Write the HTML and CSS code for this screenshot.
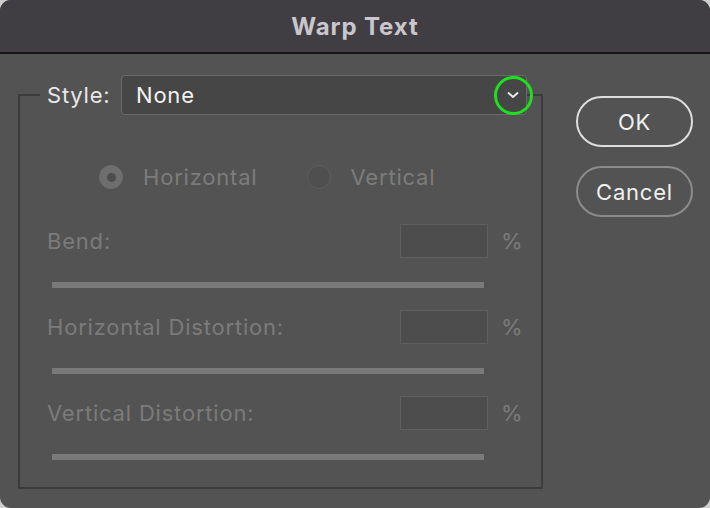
FILE: index.html
```html
<!DOCTYPE html>
<html>
<head>
<meta charset="utf-8">
<link rel="stylesheet" href="styles.css">
</head>
<body>
<div class="dialog">
  <div class="titlebar">Warp Text</div>
  <div class="content">
    <fieldset class="group">
      <legend class="style-row">
        <span class="style-label">Style:</span>
        <div class="select">
          <span class="select-value">None</span>
          <svg class="chevron" width="14" height="8" viewBox="0 0 14 8"><path d="M2.5 2 L7 6 L11.5 2" fill="none" stroke="#ececec" stroke-width="1.8" stroke-linecap="round" stroke-linejoin="round"/></svg>
          <span class="highlight"></span>
        </div>
      </legend>
      <div class="group-body">
        <div class="radios">
          <label class="radio"><span class="dot on"></span><span class="radio-text">Horizontal</span></label>
          <label class="radio"><span class="dot"></span><span class="radio-text">Vertical</span></label>
        </div>
        <div class="setting">
          <div class="setting-row">
            <span class="setting-label">Bend:</span>
            <span class="field"></span>
            <span class="pct">%</span>
          </div>
          <div class="track"></div>
        </div>
        <div class="setting">
          <div class="setting-row">
            <span class="setting-label">Horizontal Distortion:</span>
            <span class="field"></span>
            <span class="pct">%</span>
          </div>
          <div class="track"></div>
        </div>
        <div class="setting">
          <div class="setting-row">
            <span class="setting-label">Vertical Distortion:</span>
            <span class="field"></span>
            <span class="pct">%</span>
          </div>
          <div class="track"></div>
        </div>
      </div>
    </fieldset>
    <div class="buttons">
      <button class="btn btn-ok">OK</button>
      <button class="btn btn-cancel">Cancel</button>
    </div>
  </div>
</div>
</body>
</html>
```
FILE: styles.css
```css
html, body {
  margin: 0;
  padding: 0;
  background: #cfcfcf;
}
body {
  width: 710px;
  height: 508px;
  overflow: hidden;
  font-family: Inter, "Noto Sans", sans-serif;
  font-size: 22px;
  letter-spacing: 0.8px;
}
.dialog {
  width: 710px;
  height: 508px;
  background: #535353;
  border-radius: 11px;
  overflow: hidden;
}
.titlebar {
  height: 52px;
  background: #403e43;
  border-bottom: 2px solid #141414;
  color: #c9c7cd;
  font-size: 24px;
  font-weight: 700;
  letter-spacing: 0.9px;
  display: flex;
  align-items: center;
  justify-content: center;
}
.content {
  display: flex;
  align-items: flex-start;
  padding-top: 21px;
}
.group {
  margin: 0 0 0 18px;
  padding: 0;
  width: 521px;
  height: 410px;
  border: 2px solid #3c3c3c;
  min-width: 0;
}
.style-row {
  margin-left: 20px;
  padding: 0 0 0 7px;
  display: flex;
  align-items: center;
  gap: 13px;
  height: 40px;
}
.style-label {
  color: #e8e8e8;
  width: 61px;
  white-space: nowrap;
}
.select {
  position: relative;
  height: 38px;
  width: 390px;
  background: #464646;
  border: 1px solid #6a6a6a;
  border-radius: 4px;
  display: flex;
  align-items: center;
  padding-left: 14px;
}
.select-value {
  color: #f2f2f2;
  flex: 1;
}
.chevron {
  margin-right: 6px;
}
.highlight {
  position: absolute;
  right: -7px;
  top: 0;
  width: 33px;
  height: 33px;
  border: 3.5px solid #1fe01f;
  border-radius: 50%;
}
.group-body {
  padding: 50px 0 0 27px;
}
.radios {
  display: flex;
  gap: 49px;
  margin-left: 52px;
  height: 24px;
  align-items: center;
}
.radio {
  display: flex;
  align-items: center;
  gap: 20px;
  color: #7c7c7c;
}
.dot {
  width: 22px;
  height: 22px;
  border-radius: 50%;
  border: 1px solid #5e5e5e;
  background: #4f4f4f;
  display: flex;
  align-items: center;
  justify-content: center;
}
.dot.on {
  background: #6e6e6e;
  border-color: #6e6e6e;
}
.dot.on::after {
  content: "";
  width: 9px;
  height: 9px;
  border-radius: 50%;
  background: #4c4c4c;
}
.setting {
  margin-top: 35px;
}
.setting + .setting {
  margin-top: 22px;
}
.setting-row {
  display: flex;
  align-items: center;
  height: 34px;
}
.setting-label {
  flex: 1;
  color: #7b7b7b;
}
.field {
  width: 86px;
  height: 32px;
  background: #4d4d4d;
  border: 1px solid #5f5f5f;
}
.pct {
  color: #7b7b7b;
  margin-left: 13px;
  width: 40px;
}
.track {
  margin: 24px 0 0 5px;
  width: 432px;
  height: 6px;
  background: #7a7a7a;
}
.buttons {
  display: flex;
  flex-direction: column;
  gap: 19px;
  margin-left: 33px;
  margin-top: 21px;
}
.btn {
  width: 117px;
  height: 51px;
  border-radius: 26px;
  background: transparent;
  color: #f0f0f0;
  font-family: Inter, "Noto Sans", sans-serif;
  font-size: 22px;
  letter-spacing: 0.8px;
  padding: 0;
}
.btn-ok {
  border: 2px solid #dedede;
}
.btn-cancel {
  border: 2px solid #8c8c8c;
}
```
